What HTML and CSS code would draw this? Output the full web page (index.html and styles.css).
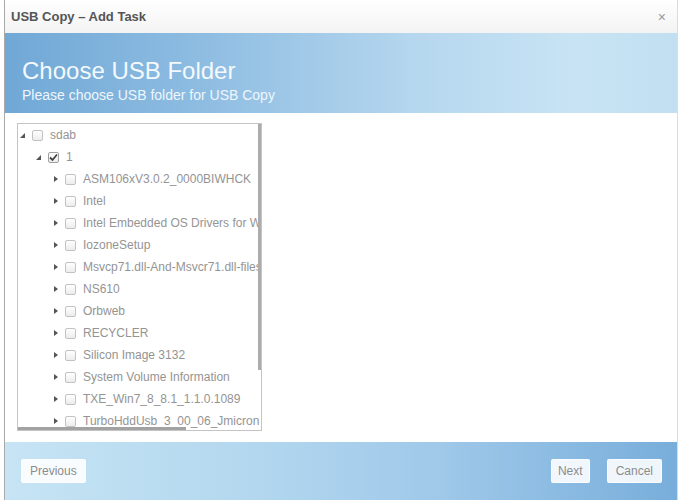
FILE: index.html
```html
<!DOCTYPE html>
<html lang="en">
    <head>
        <meta charset="UTF-8">
        <title>USB Copy - Add Task</title>
        <link rel="stylesheet" href="styles.css">
    </head>
    <body>
        <div class="dialog">
            <div class="titlebar">
                <span class="title">USB Copy &ndash; Add Task</span>
                <span class="close">&times;</span>
            </div>
            <div class="banner">
                <h1>Choose USB Folder</h1>
                <p>Please choose USB folder for USB Copy</p>
            </div>
            <div class="content">
                <div class="tree">
                    <div class="row lv0"><span class="arrow open"></span><span class="check"></span><span class="name">sdab</span></div>
                    <div class="row lv1"><span class="arrow open"></span><span class="check on"><svg width="9" height="9" viewBox="0 0 9 9"><path d="M1 4.5 L3.5 7 L8 1.5" fill="none" stroke="#444" stroke-width="1.8"/></svg></span><span class="name">1</span></div>
                    <div class="row lv2"><span class="arrow"></span><span class="check"></span><span class="name">ASM106xV3.0.2_0000BIWHCK</span></div>
                    <div class="row lv2"><span class="arrow"></span><span class="check"></span><span class="name">Intel</span></div>
                    <div class="row lv2"><span class="arrow"></span><span class="check"></span><span class="name">Intel Embedded OS Drivers for Windows</span></div>
                    <div class="row lv2"><span class="arrow"></span><span class="check"></span><span class="name">IozoneSetup</span></div>
                    <div class="row lv2"><span class="arrow"></span><span class="check"></span><span class="name">Msvcp71.dll-And-Msvcr71.dll-files</span></div>
                    <div class="row lv2"><span class="arrow"></span><span class="check"></span><span class="name">NS610</span></div>
                    <div class="row lv2"><span class="arrow"></span><span class="check"></span><span class="name">Orbweb</span></div>
                    <div class="row lv2"><span class="arrow"></span><span class="check"></span><span class="name">RECYCLER</span></div>
                    <div class="row lv2"><span class="arrow"></span><span class="check"></span><span class="name">Silicon Image 3132</span></div>
                    <div class="row lv2"><span class="arrow"></span><span class="check"></span><span class="name">System Volume Information</span></div>
                    <div class="row lv2"><span class="arrow"></span><span class="check"></span><span class="name">TXE_Win7_8_8.1_1.1.0.1089</span></div>
                    <div class="row lv2"><span class="arrow"></span><span class="check"></span><span class="name">TurboHddUsb_3_00_06_Jmicron</span></div>
                    <div class="vscroll"></div>
                    <div class="hscroll"></div>
                </div>
            </div>
            <div class="footer">
                <button class="btn">Previous</button>
                <span class="spacer"></span>
                <button class="btn next">Next</button>
                <button class="btn">Cancel</button>
            </div>
        </div>
    </body>
</html>
```

FILE: styles.css
```css
        body{
            margin: 0;
            background-color: white;
            font-family: "Liberation Sans", Arial, sans-serif;
        }
        .dialog{
            margin-left: 4px;
            width: 672px;
            height: 500px;
            border-left: 1px solid #a9a9a9;
            border-right: 1px solid #dcdcdc;
            display: flex;
            flex-direction: column;
        }
        .titlebar{
            height: 33px;
            flex: none;
            display: flex;
            align-items: center;
            justify-content: space-between;
            padding: 0 11px 0 6px;
            background: linear-gradient(#ffffff, #f3f3f3);
        }
        .title{
            font-size: 13px;
            font-weight: bold;
            color: #555;
        }
        .close{
            font-size: 14px;
            color: #999;
        }
        .banner{
            height: 80px;
            flex: none;
            box-sizing: border-box;
            padding: 24px 17px 0;
            background: linear-gradient(90deg, #70a8d6 0%, #8fbde2 30%, #b4d6ee 60%, #c8e4f4 85%, #c0dff1 100%);
            color: #f4f9fd;
        }
        .banner h1{
            margin: 0;
            font-size: 24px;
            line-height: 28px;
            font-weight: normal;
        }
        .banner p{
            margin: 1px 0 0;
            font-size: 14px;
            line-height: 18px;
            color: #eef6fb;
        }
        .content{
            flex: 1;
            padding: 10px 0 0 12px;
        }
        .tree{
            position: relative;
            width: 243px;
            height: 306px;
            border: 1px solid #c4c4c4;
            overflow: hidden;
        }
        .row{
            display: flex;
            align-items: center;
            height: 22px;
            white-space: nowrap;
        }
        .lv0{ padding-left: 1px; }
        .lv1{ padding-left: 17px; }
        .lv2{ padding-left: 34px; }
        .arrow{
            flex: none;
            width: 7px;
            height: 7px;
            margin-right: 6px;
            display: flex;
            align-items: center;
            justify-content: center;
        }
        .arrow::before{
            content: '';
            border-left: 4px solid #555;
            border-top: 3px solid transparent;
            border-bottom: 3px solid transparent;
        }
        .arrow.open::before{
            border-top: 0;
            border-left: 5px solid transparent;
            border-bottom: 5px solid #555;
        }
        .check{
            flex: none;
            box-sizing: border-box;
            width: 11px;
            height: 11px;
            margin-right: 7px;
            border: 1px solid #c2c2c2;
            border-radius: 2px;
            background: linear-gradient(#ffffff, #ececec);
            display: flex;
            align-items: center;
            justify-content: center;
        }
        .check.on{
            border-color: #a0a0a0;
        }
        .name{
            font-size: 12px;
            color: #949494;
        }
        .vscroll{
            position: absolute;
            right: 0;
            top: 0;
            width: 3px;
            height: 246px;
            background-color: #acacac;
        }
        .hscroll{
            position: absolute;
            left: 0;
            bottom: 0;
            width: 168px;
            height: 3px;
            background-color: #a2a2a2;
        }
        .footer{
            height: 58px;
            flex: none;
            display: flex;
            align-items: center;
            gap: 17px;
            padding: 0 15px 0 16px;
            background: linear-gradient(90deg, #c6e4f4 0%, #b4d8ef 35%, #9fc8e9 65%, #78aedb 100%);
        }
        .spacer{
            flex: 1;
        }
        .btn{
            height: 24px;
            padding: 0 8px;
            font-family: "Liberation Sans", Arial, sans-serif;
            font-size: 12px;
            color: #8c8c8c;
            background-color: rgba(255,255,255,0.88);
            border: 1px solid rgba(255,255,255,0.7);
            border-radius: 2px;
        }
        .btn.next{
            padding: 0 6px;
        }
```
